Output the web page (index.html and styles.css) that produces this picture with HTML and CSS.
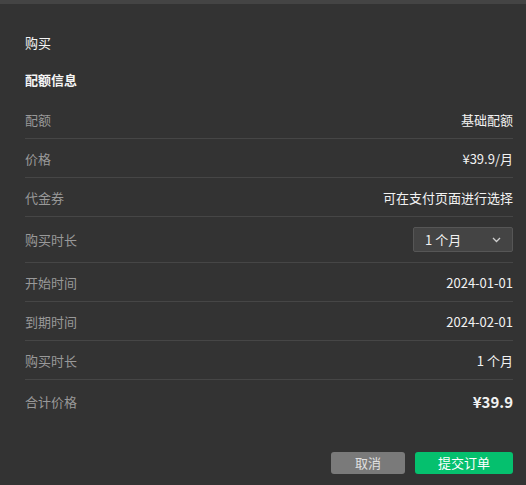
FILE: index.html
```html
<!DOCTYPE html>
<html lang="zh-CN">
<head>
<meta charset="utf-8">
<link rel="stylesheet" href="styles.css">
</head>
<body>
<div class="topbar"></div>
<div class="dialog">
  <div class="title">购买</div>
  <div class="section">配额信息</div>
  <div class="list">
    <div class="row"><span class="label">配额</span><span class="value">基础配额</span></div>
    <div class="row"><span class="label">价格</span><span class="value">¥39.9/月</span></div>
    <div class="row"><span class="label">代金券</span><span class="value">可在支付页面进行选择</span></div>
    <div class="row row-select"><span class="label">购买时长</span>
      <div class="select"><span>1 个月</span>
        <svg class="chev" width="9" height="6" viewBox="0 0 9 6"><path d="M1 1 L4.5 4.5 L8 1" fill="none" stroke="#cfcfcf" stroke-width="1.3"/></svg>
      </div>
    </div>
    <div class="row"><span class="label">开始时间</span><span class="value">2024-01-01</span></div>
    <div class="row"><span class="label">到期时间</span><span class="value">2024-02-01</span></div>
    <div class="row"><span class="label">购买时长</span><span class="value">1 个月</span></div>
    <div class="row row-total"><span class="label">合计价格</span><span class="value total">¥39.9</span></div>
  </div>
  <div class="actions">
    <button class="btn btn-cancel">取消</button>
    <button class="btn btn-primary">提交订单</button>
  </div>
</div>
</body>
</html>
```
FILE: styles.css
```css
html, body {
  margin: 0;
  padding: 0;
  background: #333333;
  height: 100%;
}
body {
  font-family: "Noto Sans CJK SC", "Noto Sans", sans-serif;
  font-size: 13px;
  color: #eeeeee;
}
.topbar {
  height: 4px;
  background: #444444;
}
.dialog {
  padding: 29px 13px 0 25px;
}
.title {
  line-height: 20px;
  font-size: 13px;
  color: #f5f5f5;
}
.section {
  margin-top: 17px;
  line-height: 20px;
  font-weight: bold;
  color: #f5f5f5;
}
.list {
  margin-top: 10px;
}
.row {
  display: flex;
  justify-content: space-between;
  align-items: center;
  height: 38px;
  border-bottom: 1px solid #464646;
}
.row-select {
  height: 45px;
}
.row-total {
  height: 43px;
  border-bottom: none;
}
.label {
  color: #999999;
}
.value {
  color: #f2f2f2;
}
.total {
  font-size: 15px;
  font-weight: bold;
}
.select {
  width: 100px;
  height: 25px;
  box-sizing: border-box;
  background: #444444;
  border: 1px solid #565656;
  border-radius: 2px;
  display: flex;
  align-items: center;
  justify-content: space-between;
  padding: 0 11px 0 11px;
  color: #f2f2f2;
}
.chev {
  display: block;
}
.actions {
  margin-top: 29px;
  display: flex;
  justify-content: flex-end;
  gap: 10px;
}
.btn {
  height: 22px;
  border: none;
  border-radius: 3px;
  font-family: inherit;
  font-size: 13px;
  padding: 0;
  line-height: 22px;
}
.btn-cancel {
  width: 74px;
  background: #7a7a7a;
  color: #e0e0e0;
}
.btn-primary {
  width: 98px;
  background: #05c06e;
  color: #ffffff;
}
```
